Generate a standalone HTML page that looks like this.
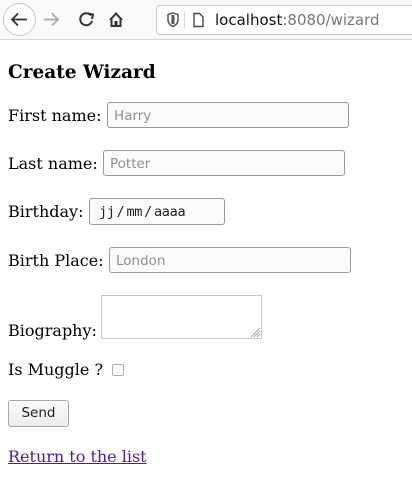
<!DOCTYPE html>
<html><head><meta charset="utf-8"><style>
*{box-sizing:border-box}
body{margin:0;width:412px;height:483px;background:#fff;position:relative;overflow:hidden;font-family:"DejaVu Serif","Liberation Serif",serif;font-size:16px;color:#000}
.chrome{position:absolute;left:0;top:0;width:412px;height:40px;background:#f9f9fa;border-bottom:1px solid #d7d7db}
.a{position:absolute;white-space:nowrap}
.inp{position:absolute;height:26px;border:1px solid #9a9a9a;border-radius:3px;background:#fbfbfb;font-family:"DejaVu Sans",sans-serif;font-size:13.5px;color:#8f8f8f;padding:5px 6px;line-height:16px}
.lbl{position:absolute;line-height:20px}
</style></head><body>
<div class="chrome">
  <div class="a" style="left:3px;top:3px;width:33px;height:33px;border:1px solid #c8c8c8;border-radius:50%;background:#fff"></div>
  <svg class="a" style="left:0;top:0" width="140" height="40">
    <path d="M27 19.5H12M18 13.5L12 19.5L18 25.5" stroke="#333" stroke-width="1.8" fill="none"/>
    <path d="M44 19.5H58M52 13.5L58 19.5L52 25.5" stroke="#aaa" stroke-width="1.8" fill="none"/>
    <path d="M91 15.5A6 6 0 1 0 92 21" stroke="#333" stroke-width="2" fill="none"/>
    <path d="M88 13.5L93 14.5L92 19" stroke="#333" stroke-width="2" fill="none"/>
    <path d="M110 20L116 13.5L122 20M111.5 19V26H120.5V19" stroke="#333" stroke-width="2" fill="none"/>
    <rect x="114.5" y="21" width="3" height="5" fill="#333"/>
  </svg>
  <div class="a" style="left:156px;top:5px;width:260px;height:30px;background:#fff;border:1px solid #ccc;border-radius:4px"></div>
  <svg class="a" style="left:156px;top:5px" width="60" height="30">
    <path d="M12 9.5L17 8L22 9.5V15C22 18 19.5 20.5 17 21.5C14.5 20.5 12 18 12 15Z" stroke="#555" stroke-width="1.5" fill="none"/>
    <path d="M17 10V19" stroke="#555" stroke-width="3"/>
    <line x1="28.5" y1="6" x2="28.5" y2="24" stroke="#ddd"/>
    <path d="M38 8.5H43.5L47 12V21.5H38Z" stroke="#444" stroke-width="1.4" fill="none"/>
  </svg>
  <div class="a" style="left:215px;top:11px;font-family:'DejaVu Sans',sans-serif;font-size:15px;color:#111">localhost<span style="color:#777">:8080/wizard</span></div>
</div>
<div class="a" style="left:8px;top:62px;font-weight:bold;font-size:18.5px">Create Wizard</div>
<div class="lbl" style="left:8px;top:106px">First name:</div>
<div class="inp" style="left:107px;top:102px;width:242px">Harry</div>
<div class="lbl" style="left:8px;top:154px">Last name:</div>
<div class="inp" style="left:103px;top:150px;width:242px">Potter</div>
<div class="lbl" style="left:8px;top:202px">Birthday:</div>
<div class="inp" style="left:89px;top:198px;width:136px;height:27px;color:#222;font-family:'DejaVu Sans Mono',monospace;font-size:13.5px;padding-left:9px;letter-spacing:-0.3px">jj<span style="margin:0 2px">/</span>mm<span style="margin:0 2px">/</span>aaaa</div>
<div class="lbl" style="left:8px;top:251px">Birth Place:</div>
<div class="inp" style="left:109px;top:247px;width:242px">London</div>
<div class="lbl" style="left:8px;top:321px">Biography:</div>
<div class="a" style="left:101px;top:295px;width:161px;height:44px;border:1px solid #c8c8c8;background:#fff"></div>
<svg class="a" style="left:248px;top:325px" width="13" height="13"><path d="M12 3L3 12M12 6L6 12M12 9L9 12" stroke="#aaa" stroke-width="1"/></svg>
<div class="lbl" style="left:8px;top:360px">Is Muggle ?</div>
<div class="a" style="left:112px;top:364px;width:12px;height:12px;border:1px solid #b0b0b0;border-radius:2px;background:#fbfbfb"></div>
<div class="a" style="left:8px;top:400px;width:61px;height:27px;border:1px solid #a8a8a8;border-radius:3px;background:linear-gradient(#fafafa,#ececec);font-family:'DejaVu Sans',sans-serif;font-size:13.5px;text-align:center;line-height:25px;color:#222">Send</div>
<div class="a" style="left:8px;top:447px;color:#551a8b;text-decoration:underline">Return to the list</div>
</body></html>
